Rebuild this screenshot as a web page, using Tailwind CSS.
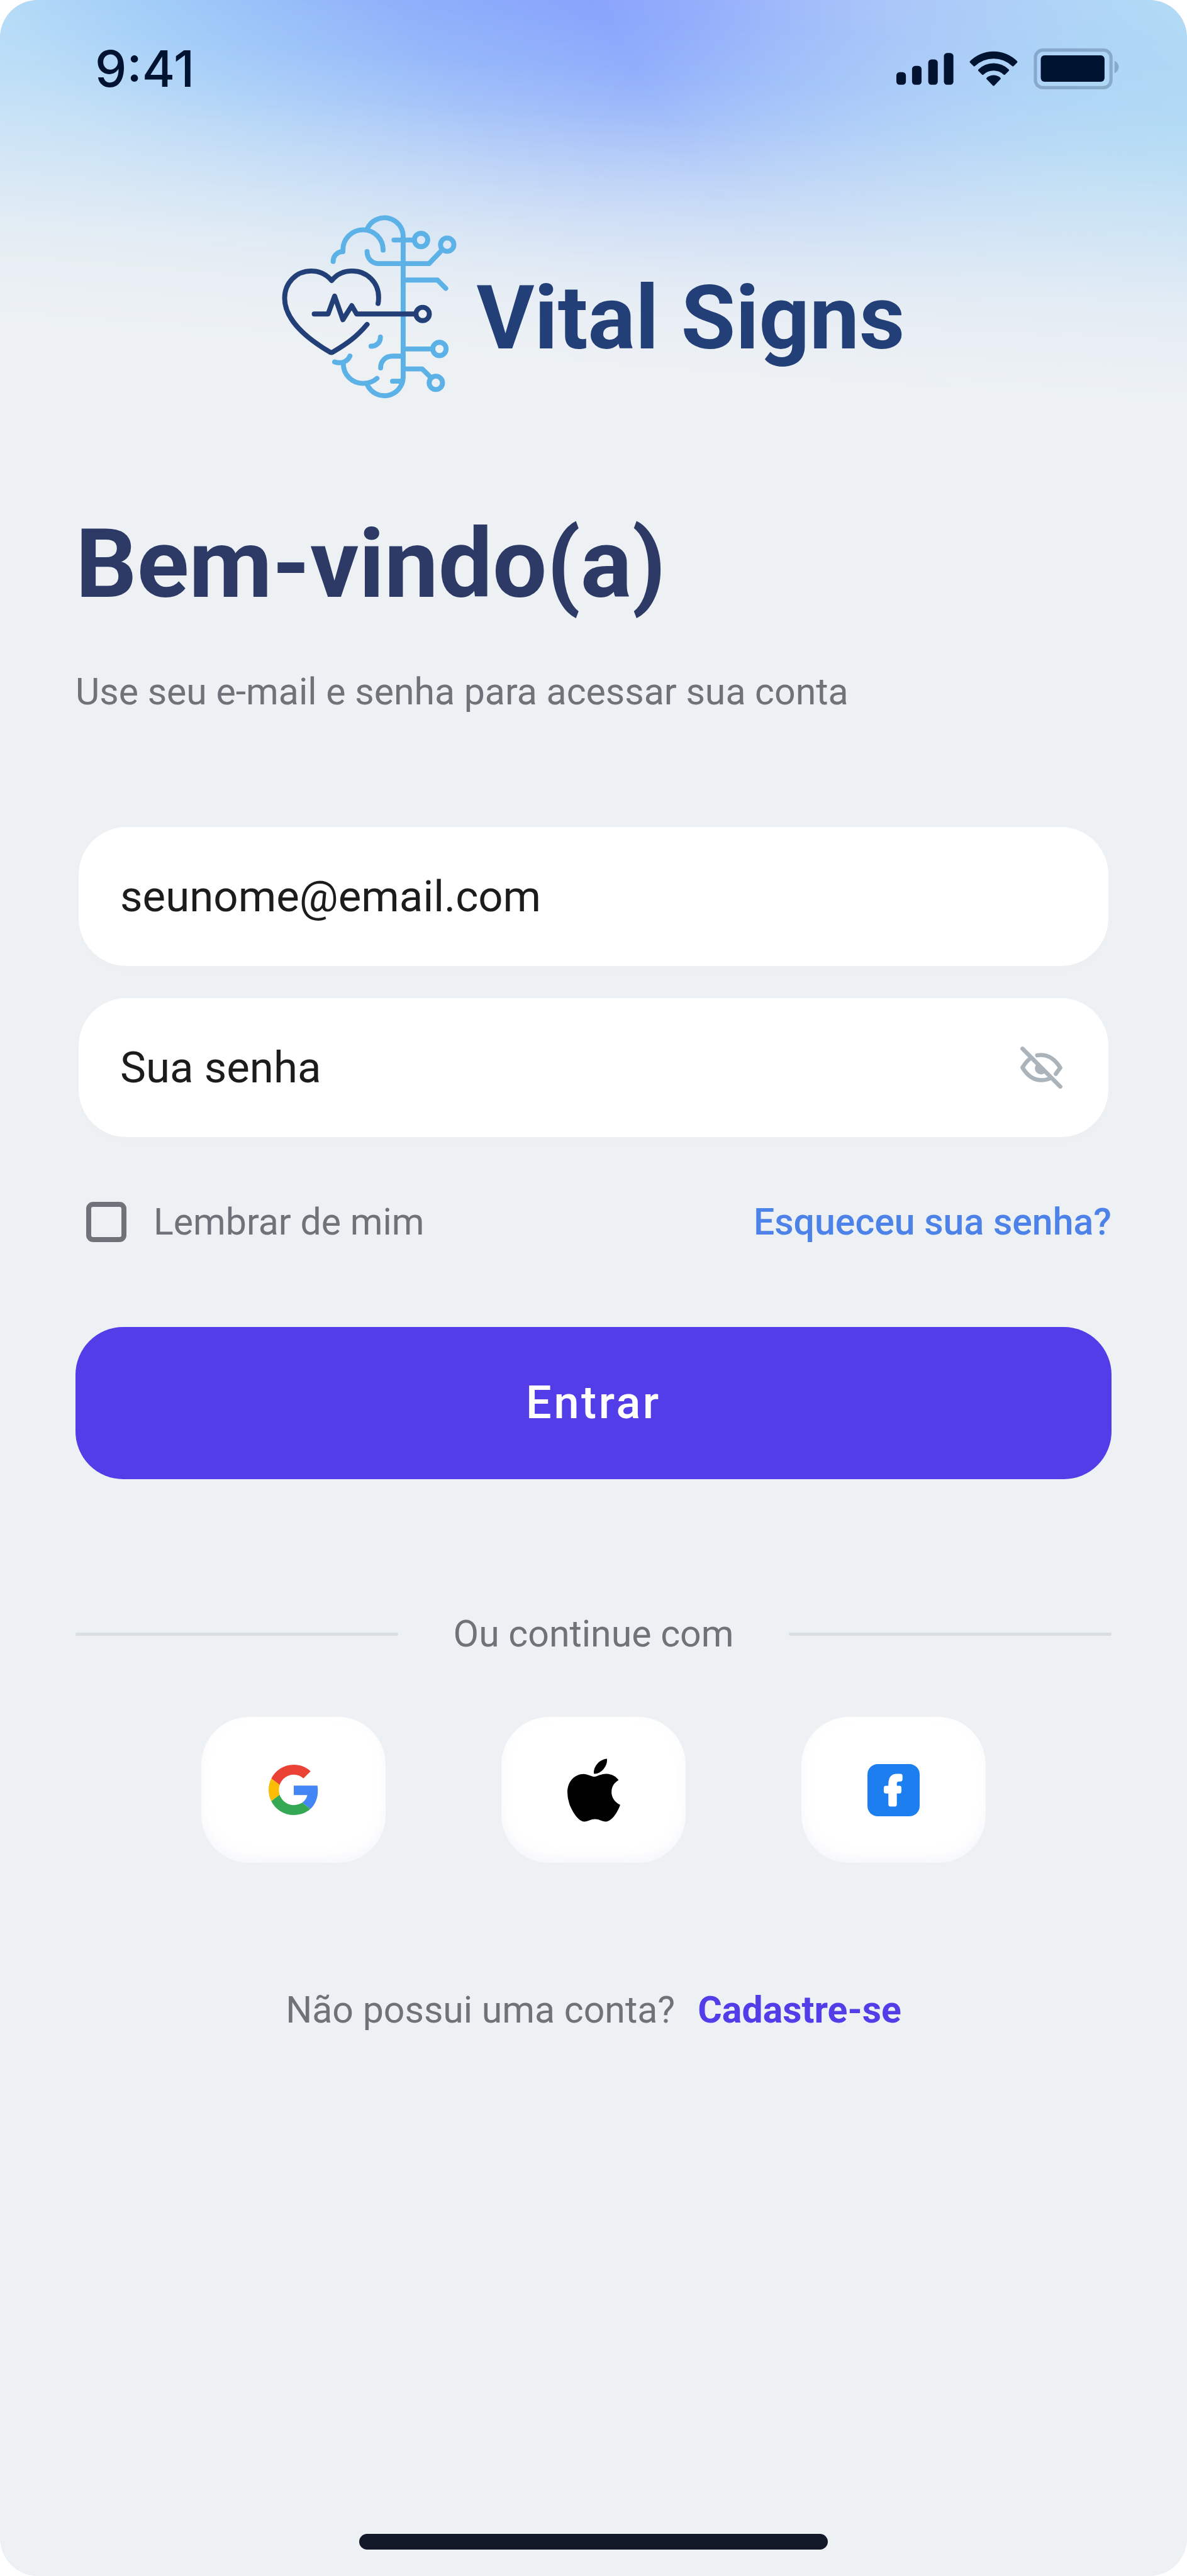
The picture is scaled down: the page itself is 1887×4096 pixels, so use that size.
<!DOCTYPE html>
<html lang="pt-BR">
<head>
<meta charset="utf-8">
<meta name="viewport" content="width=device-width, initial-scale=1">
<title>Vital Signs – Entrar</title>
<script src="https://cdn.jsdelivr.net/npm/@tailwindcss/browser@4"></script>
</head>
<body class="bg-white font-[Roboto,'Liberation_Sans',sans-serif] text-[59px] leading-[72px] text-[#6f7379]">
<div class="relative isolate flex min-h-screen flex-col overflow-hidden rounded-[60px] bg-[#edf1f4]">

  <!-- Soft colour wash behind the header -->
  <div aria-hidden="true" class="absolute inset-x-0 top-0 -z-10 h-[640px] bg-[radial-gradient(ellipse_44%_70%_at_94%_45%,rgba(175,222,243,0.7),rgba(175,222,243,0)),linear-gradient(180deg,rgba(150,200,248,0)_0%,rgba(150,200,248,0.5)_60%),linear-gradient(56deg,#c0e4f6_0%,#b4dbf7_18%,#9fcaf8_30%,#8fb0fa_46%,#89a4fc_59%,#a9c0fa_79%,#b4dbf6_100%)] [mask-image:linear-gradient(184deg,black_12%,rgba(0,0,0,0.95)_22%,rgba(0,0,0,0.8)_32%,rgba(0,0,0,0.5)_45%,rgba(0,0,0,0.31)_54%,rgba(0,0,0,0.15)_63%,rgba(0,0,0,0.05)_72%,rgba(0,0,0,0.01)_80%,transparent_86%)]"></div>

  <header class="flex h-[218px] items-center justify-between pr-[108px] pl-[151px] text-[#001330]">
    <time class="font-[Inter,'Liberation_Sans',sans-serif] text-[80px] leading-[96px] font-medium">9:41</time>
    <div class="flex items-center gap-[25px]">
      <svg class="h-[51px] w-[91px]" viewBox="0 0 106 59" fill="currentColor" role="img" aria-label="Sinal">
        <rect x="0" y="35.5" width="17.6" height="23.5" rx="6"/>
        <rect x="29" y="24" width="17.6" height="35" rx="6"/>
        <rect x="59" y="12" width="17.6" height="47" rx="6"/>
        <rect x="88" y="0" width="17.6" height="59" rx="6"/>
      </svg>
      <svg class="h-[56px] w-[77px]" viewBox="0 0 90 65" fill="currentColor" role="img" aria-label="Wi-Fi">
        <path d="M1.5 18.5A62 62 0 0 1 88.5 18.5Q90 20 88.8 21.3L82 28Q81 29 79.5 27.8A50 50 0 0 0 10.5 27.8Q9 29 8 28L1.2 21.3Q0 20 1.5 18.5Z"/>
        <path d="M17 34A40 40 0 0 1 73 34Q74.5 35.7 73.3 37L66.5 43.5Q65 44.8 63.5 43.5A27 27 0 0 0 26.5 43.5Q25 44.8 23.5 43.5L16.7 37Q15.5 35.7 17 34Z"/>
        <path d="M33 49A19 19 0 0 1 57 49Q59 50.7 58 52L46.5 64Q45 65.4 43.5 64L32 52Q31 50.7 33 49Z"/>
      </svg>
      <svg class="h-[65px] w-[136px]" viewBox="0 0 158 76" fill="currentColor" role="img" aria-label="Bateria">
        <rect x="3" y="3" width="140.5" height="70" rx="14" fill="none" stroke="currentColor" stroke-width="6" opacity=".22"/>
        <rect x="13" y="13" width="118.5" height="49" rx="7"/>
        <path d="M150 23C155 25 158 30 158 34.5C158 39 155 44 150 46Z" opacity=".22"/>
      </svg>
    </div>
  </header>

  <main class="flex flex-col px-[120px] pt-[124px]">
    <div class="flex items-center justify-center gap-[31px]">
      <svg class="h-[292px] w-[278px] shrink-0" viewBox="66 84 968 1018" fill="none" stroke-width="27.5" stroke-linecap="round" stroke-linejoin="round" aria-hidden="true">
        <g stroke="#5cb1e6">
          <path d="M540 158A104 104 0 0 1 738 201V983A104 104 0 0 1 540 1026"/>
          <path d="M350 341C350 310 374 286 404 286V278A111 112 0 0 1 627 278"/>
          <path d="M687 222H800"/><circle cx="837" cy="222" r="37"/>
          <path d="M538 286C538 325 566 353 602 353H881L945 286"/><circle cx="982" cy="248" r="37"/>
          <path d="M738 444H928L974 490"/>
          <path d="M738 826H902"/><circle cx="939" cy="826" r="37"/>
          <path d="M738 937H844L893 986"/><circle cx="919" cy="1014" r="37"/>
          <path d="M679 1005H728"/>
          <path d="M613 931C613 893 640 866 680 866H738"/>
          <path d="M612 760C612 790 590 811 560 811"/>
          <path d="M358 898C395 910 428 898 443 865"/>
          <path d="M406 905C406 970 455 1017 515 1017C548 1017 575 1005 593 989"/>
        </g>
        <g stroke="#233f78">
          <path d="M599 574C602 562 602 550 602 540C602 458 538 394 455 394C410 394 370 412 342 447C312 412 274 394 230 394C144 394 81 460 81 545C81 664 205 768 328 841Q340 850 352 841C425 798 482 758 538 690"/>
          <path d="M245 632H322L358 533L404 664L453 586L480 632H805"/><circle cx="846" cy="632" r="37"/>
        </g>
      </svg>
      <span class="pt-[36px] text-[141px] leading-[166px] font-bold text-[#233f78]">Vital Signs</span>
    </div>

    <h1 class="mt-[173px] text-[153px] leading-[180px] font-bold text-[#2d3a66]">Bem-vindo(a)</h1>
    <p class="mt-[77px]">Use seu e-mail e senha para acessar sua conta</p>

    <form class="mt-[179px] flex flex-col">
      <div class="mx-[5px] flex flex-col gap-[51px] text-[69px]">
        <input type="email" aria-label="E-mail" placeholder="seunome@email.com" class="h-[221px] w-full rounded-[76px] bg-white px-[66px] text-[#1c1c1e] shadow-[0_10px_20px_rgba(0,0,0,0.008)] outline-none placeholder:text-[#1c1c1e]">
        <div class="flex h-[221px] items-center rounded-[76px] bg-white pr-[73px] pl-[66px] shadow-[0_10px_20px_rgba(0,0,0,0.008)]">
          <input type="password" aria-label="Senha" placeholder="Sua senha" class="h-full min-w-0 flex-1 bg-transparent text-[#1c1c1e] outline-none placeholder:text-[#1c1c1e]">
          <button type="button" aria-label="Mostrar senha" class="shrink-0 text-[#abb4bb]">
            <svg class="size-[67px]" viewBox="199 165 234 234" fill="none" stroke="currentColor" stroke-width="23" stroke-linecap="round" stroke-linejoin="round">
              <path d="M293 214C345 206 385 226 421 283L396 317"/>
              <path d="M256 230C240 241 226 257 211 282C240 330 274 352 316 352C335 352 350 349 366 341"/>
              <path d="M211 177L421 388"/>
              <path d="M292 260A34 34 0 0 0 336 312Z" fill="currentColor" stroke="none"/>
            </svg>
          </button>
        </div>
      </div>

      <div class="mt-[99px] flex items-center justify-between">
        <label class="flex items-center gap-[43px] pl-[17px]">
          <input type="checkbox" class="size-[64px] appearance-none rounded-[11px] border-[8px] border-[#6f7379] checked:bg-[#6f7379]">
          Lembrar de mim
        </label>
        <a href="#" class="font-medium text-[#4d82e8]">Esqueceu sua senha?</a>
      </div>

      <button type="submit" class="mt-[131px] h-[242px] rounded-[76px] bg-[#523de9] text-[72px] font-medium tracking-wider text-white">Entrar</button>
    </form>

    <div class="mt-[210px] flex items-center gap-[88px]">
      <span class="h-[5px] flex-1 rounded-full bg-[#d9dee2]"></span>
      <span>Ou continue com</span>
      <span class="h-[5px] flex-1 rounded-full bg-[#d9dee2]"></span>
    </div>

    <div class="mt-[96px] flex justify-center gap-[184px]">
      <button type="button" aria-label="Google" class="flex h-[232px] w-[293px] items-center justify-center rounded-[76px] bg-white shadow-[inset_0_-10px_20px_rgba(225,228,242,0.3)]">
        <svg class="size-[80px]" viewBox="0 0 48 48">
          <path fill="#EA4335" d="M24 9.500c3.540 0 6.710 1.220 9.210 3.600l6.850-6.850C35.900 2.380 30.470 0 24 0 14.620 0 6.510 5.380 2.560 13.220l7.980 6.190C12.430 13.720 17.740 9.500 24 9.500z"/>
          <path fill="#4285F4" d="M46.980 24.550c0-1.570-.150-3.090-.380-4.550H24v9.020h12.940c-.580 2.960-2.260 5.480-4.780 7.180l7.730 6c4.510-4.180 7.090-10.360 7.090-17.650z"/>
          <path fill="#FBBC05" d="M10.530 28.590c-.480-1.450-.760-2.990-.760-4.590s.270-3.140.760-4.590l-7.980-6.190C.920 16.460 0 20.120 0 24c0 3.880.920 7.540 2.560 10.780l7.970-6.190z"/>
          <path fill="#34A853" d="M24 48c6.480 0 11.930-2.130 15.890-5.810l-7.730-6c-2.150 1.450-4.920 2.300-8.160 2.300-6.260 0-11.570-4.220-13.470-9.910l-7.980 6.190C6.510 42.620 14.620 48 24 48z"/>
        </svg>
      </button>
      <button type="button" aria-label="Apple" class="flex h-[232px] w-[293px] items-center justify-center rounded-[76px] bg-white shadow-[inset_0_-10px_20px_rgba(225,228,242,0.3)]">
        <svg class="h-[101px] w-[84px]" viewBox="4 32 376.5 448" fill="#000">
          <path d="M318.7 268.7c-.2-36.7 16.400-64.400 50-84.800-18.800-26.900-47.200-41.700-84.700-44.600-35.500-2.800-74.300 20.700-88.500 20.700-15 0-49.400-19.700-76.400-19.700C63.300 141.200 4 184.800 4 273.500q0 39.300 14.400 81.200c12.800 36.700 59 126.700 107.200 125.200 25.200-.6 43-17.900 75.800-17.900 31.800 0 48.300 17.900 76.400 17.900 48.600-.7 90.400-82.500 102.600-119.300-65.200-30.700-61.700-90-61.700-91.900zm-56.600-164.200c27.300-32.400 24.800-61.900 24-72.500-24.100 1.400-52 16.400-67.900 34.900-17.500 19.800-27.800 44.300-25.600 71.900 26.100 2 49.900-11.400 69.500-34.300z"/>
        </svg>
      </button>
      <button type="button" aria-label="Facebook" class="flex h-[232px] w-[293px] items-center justify-center rounded-[76px] bg-white shadow-[inset_0_-10px_20px_rgba(225,228,242,0.3)]">
        <svg class="size-[83px]" viewBox="0 0 96 96">
          <rect width="96" height="96" rx="19" fill="#1d7ef0"/>
          <path fill="#fff" d="M38.500 54H34Q30 54 30 50V44Q30 40 34 40H38.500V36Q39 18 54 18H60Q64.500 18 64.500 22V28Q64.500 32 60 32H58Q54 32 54 36V40H59Q62.500 40 62.500 44V50Q62.500 54 59 54H54V74Q54 78 51 78H42Q38.500 78 38.500 74Z"/>
        </svg>
      </button>
    </div>

    <p class="mt-[198px] flex justify-center gap-[36px]">
      <span>Não possui uma conta?</span>
      <a href="#" class="font-bold text-[#523de9]">Cadastre-se</a>
    </p>
  </main>

  <div aria-hidden="true" class="mx-auto mt-auto mb-[42px] h-[25px] w-[745px] rounded-full bg-[#121827]"></div>
</div>
</body>
</html>
